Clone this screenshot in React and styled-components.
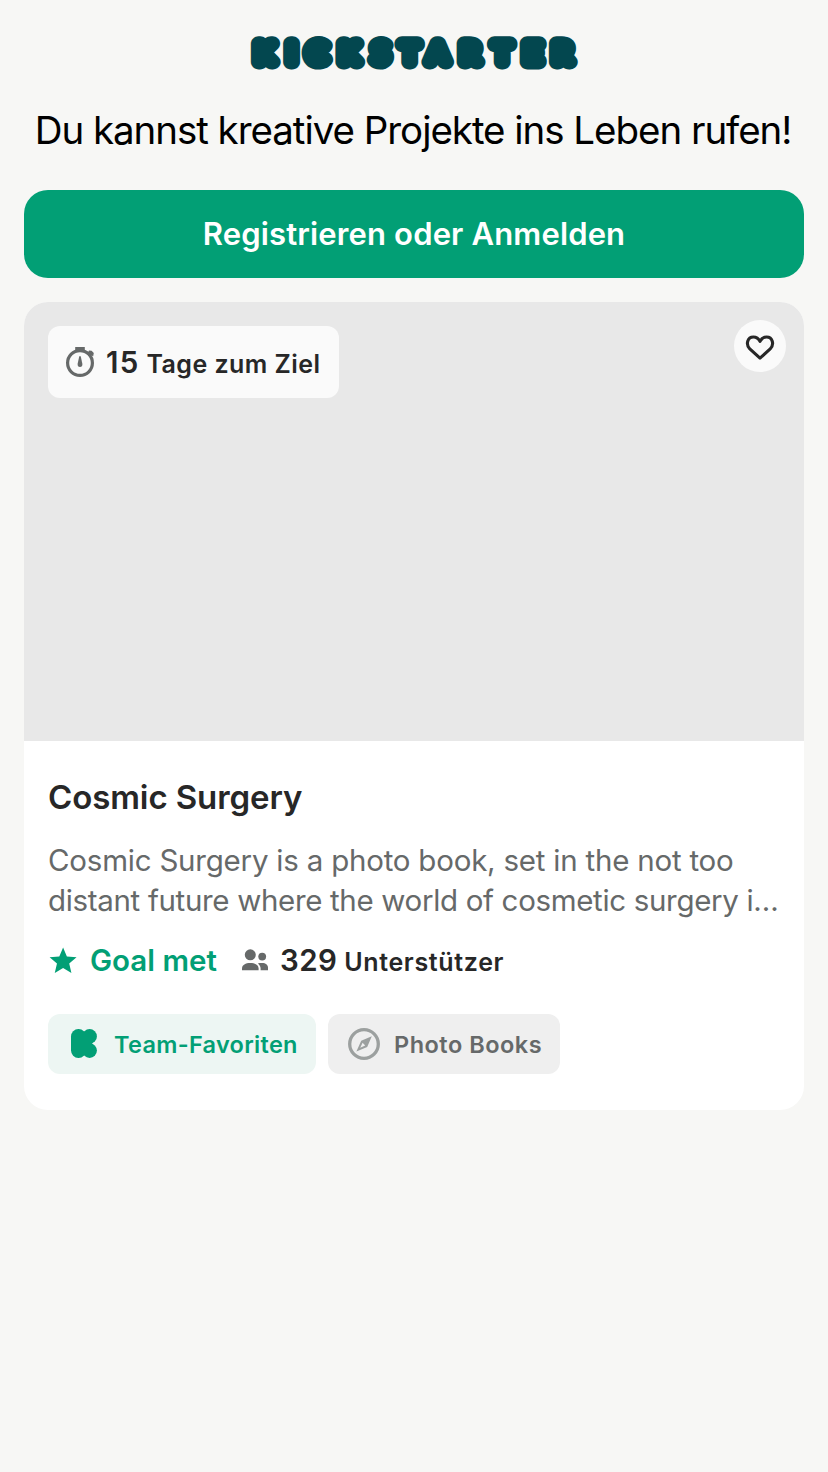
import React from 'react';
import styled, { createGlobalStyle } from 'styled-components';

const colors = {
  page: '#f7f7f5',
  brand: '#03474f',
  green: '#029f75',
  text: '#272727',
  muted: '#666969',
  soft: '#9ca09f',
};

const GlobalStyle = createGlobalStyle`
  * { box-sizing: border-box; }
  body {
    margin: 0;
    background: ${colors.page};
    color: ${colors.text};
    font-family: Inter, 'Liberation Sans', sans-serif;
  }
`;

const Page = styled.main`
  display: flex;
  flex-direction: column;
  align-items: stretch;
  min-height: 1472px;
  padding: 36px 24px 0;
`;

const Wordmark = styled.svg`
  display: block;
  align-self: center;
  width: 330px;
  height: 34px;
  overflow: visible;
  fill: ${colors.brand};

  text {
    font-family: Lato, sans-serif;
    font-size: 26px;
    font-weight: 300;
    text-anchor: middle;
    text-rendering: geometricPrecision;
    stroke: ${colors.brand};
    stroke-width: 14.8px;
    stroke-linejoin: round;
    stroke-linecap: round;
  }
`;

const Headline = styled.h1`
  margin: 36px 0;
  padding-right: 2px;
  font-size: 38.5px;
  font-weight: 400;
  line-height: 48px;
  letter-spacing: -1.04px;
  text-align: center;
  white-space: nowrap;
  color: #000;
`;

const SignUpButton = styled.button`
  height: 88px;
  flex: none;
  border: 0;
  border-radius: 24px;
  background: ${colors.green};
  color: #fff;
  font: 600 31px/40px Inter, sans-serif;
  letter-spacing: 0.15px;
`;

const Card = styled.article`
  margin-top: 24px;
  border-radius: 24px;
  overflow: hidden;
  background: #fff;
`;

const Media = styled.div`
  display: flex;
  justify-content: space-between;
  align-items: flex-start;
  height: 439px;
  padding: 18px 18px 0 24px;
  background: #e8e8e8;
`;

const Deadline = styled.div`
  display: flex;
  align-items: center;
  width: 291px;
  height: 72px;
  margin-top: 6px;
  padding-left: 16px;
  gap: 10px;
  border-radius: 12px;
  background: #fafafa;
`;

const SaveButton = styled.button`
  display: grid;
  place-items: center;
  width: 52px;
  height: 52px;
  padding: 2px 0 0;
  border: 0;
  border-radius: 50%;
  background: #fafafa;
  color: ${colors.text};
`;

const Icon = styled.svg`
  display: block;
  flex: none;
  width: ${(p) => p.$size}px;
  height: ${(p) => p.$size}px;
  color: ${(p) => p.$color || 'inherit'};
`;

const Stat = styled.span`
  padding-top: ${(p) => p.$drop || 0}px;
  font-size: 25px;
  font-weight: 600;
  line-height: 40px;
  letter-spacing: ${(p) => p.$tracking}px;
  white-space: pre;
`;

const Count = styled.span`
  font-size: 29.5px;
  letter-spacing: ${(p) => p.$tracking}px;
`;

const Body = styled.div`
  padding: 34px 24px 36px;
`;

const Title = styled.h2`
  margin: 0;
  font-size: 33px;
  font-weight: 600;
  line-height: 44px;
  letter-spacing: -0.1px;
`;

const Description = styled.p`
  margin: 21px 0 0;
  font-size: 29.5px;
  line-height: 40px;
  color: ${colors.muted};
  white-space: nowrap;
`;

const Line = styled.span`
  display: block;
  letter-spacing: ${(p) => p.$tracking}px;
`;

const Meta = styled.div`
  display: flex;
  align-items: center;
  height: 40px;
  margin-top: 21px;
`;

const Goal = styled.span`
  width: 162px;
  padding: 0 0 2px 11px;
  font-size: 29.5px;
  font-weight: 600;
  line-height: 40px;
  letter-spacing: 0;
  color: ${colors.green};
`;

const Backers = styled.div`
  display: flex;
  align-items: center;
  gap: 11px;
`;

const Tags = styled.div`
  display: flex;
  gap: 12px;
  margin-top: 33px;
`;

const Tag = styled.span`
  display: flex;
  align-items: center;
  gap: 14px;
  width: ${(p) => p.$width}px;
  height: 60px;
  padding-left: 20px;
  border-radius: 12px;
  background: ${(p) => p.$background};
  color: ${(p) => p.$color};
  font-size: 23.5px;
  font-weight: 600;
  letter-spacing: ${(p) => p.$tracking}px;
  white-space: nowrap;
`;

const Logo = () => (
  <Wordmark viewBox="0 0 330 34" role="img" aria-label="Kickstarter">
    <circle cx="68" cy="17" r="4" />
    <text transform="scale(1.05 1)" y="26.4" x="14.6 40.5 64.7 95.1 125.2 152.9 179.7 210.4 241 270 298.2">
      KICKSTARTER
    </text>
  </Wordmark>
);

const StopwatchIcon = () => (
  <Icon $size={32} $color={colors.muted} viewBox="0 0 32 32">
    <circle cx="16" cy="17" r="12.4" fill="none" stroke="currentColor" strokeWidth="3.2" />
    <path d="M11.2 1h9.6v4h-9.6zM23.4 7.6l1.6-3 2.6.2 2.2 2.2-.6 3.2z" fill="currentColor" />
    <path d="M15.2 10.6q.8-1 1.6 0l1.6 7.4q.1 3-2.4 3t-2.4-3z" fill="currentColor" />
  </Icon>
);

const HeartIcon = () => (
  <Icon $size={32} viewBox="0 0 32 32">
    <path
      d="M16 27.2L5.8 17.8C1.4 13.4 3.5 6 9.4 6c3.2 0 5.4 2 6.6 4.4C17.2 8 19.4 6 22.6 6c5.9 0 8 7.4 3.6 11.8z"
      fill="none"
      stroke="currentColor"
      strokeWidth="3.1"
      strokeLinejoin="round"
    />
  </Icon>
);

const StarIcon = () => (
  <Icon $size={31} $color={colors.green} viewBox="0.8 0.9 23 23">
    <path fill="currentColor" d="M12 17.27L18.18 21l-1.64-7.03L22 9.24l-7.19-.61L12 2 9.19 8.63 2 9.24l5.46 4.73L5.82 21z" />
  </Icon>
);

const PeopleIcon = () => (
  <Icon $size={28} $color={colors.muted} viewBox="0 0 28 28">
    <circle cx="9.3" cy="7.8" r="5.5" fill="currentColor" />
    <circle cx="21.2" cy="9.6" r="3.9" fill="currentColor" />
    <path d="M1 23.2v-1.8C1 18 4.6 16 9.3 16s8.3 2 8.3 5.4v1.8z" fill="currentColor" />
    <path d="M16.8 16.4c1.2-.3 2.7-.4 4.4-.4 3.4 0 5.8 1.8 5.8 4.6v2.6h-7.4v-1.8c0-2-1.1-3.8-2.8-5z" fill="currentColor" />
  </Icon>
);

const MarkIcon = () => (
  <Icon $size={32} viewBox="0 0 32 32">
    <g fill="currentColor">
      <rect x="3" y="1" width="15" height="29" rx="7.4" />
      <circle cx="21.6" cy="8.4" r="7.3" />
      <circle cx="21.6" cy="22.6" r="7.3" />
      <path d="M12 4.5h8l6.6 8.1-2.6 2.9 2.6 2.9L20 26.5h-8z" />
    </g>
  </Icon>
);

const CompassIcon = () => (
  <Icon $size={32} $color={colors.soft} viewBox="0 0 32 32">
    <circle cx="16" cy="16" r="14.3" fill="none" stroke="currentColor" strokeWidth="3.3" />
    <path
      fill="currentColor"
      fillRule="evenodd"
      d="M23.8 8.2l-4.6 10.8L8.4 23.6l4.8-10.8zM14.6 14.8l-2.4 5 5-2.4z"
    />
  </Icon>
);

export default function App() {
  return (
    <>
      <GlobalStyle />
      <Page>
        <Logo />
        <Headline>Du kannst kreative Projekte ins Leben rufen!</Headline>
        <SignUpButton>Registrieren oder Anmelden</SignUpButton>
        <Card>
          <Media>
            <Deadline>
              <StopwatchIcon />
              <Stat $tracking={0.45} $drop={2}>
                <Count $tracking={1.3}>15</Count> Tage zum Ziel
              </Stat>
            </Deadline>
            <SaveButton aria-label="Projekt merken">
              <HeartIcon />
            </SaveButton>
          </Media>
          <Body>
            <Title>Cosmic Surgery</Title>
            <Description>
              <Line $tracking={-0.22}>Cosmic Surgery is a photo book, set in the not too</Line>
              <Line $tracking={-0.33}>distant future where the world of cosmetic surgery i…</Line>
            </Description>
            <Meta>
              <StarIcon />
              <Goal>Goal met</Goal>
              <Backers>
                <PeopleIcon />
                <Stat $tracking={0.66}>
                  <Count $tracking={0.4}>329</Count> Unterstützer
                </Stat>
              </Backers>
            </Meta>
            <Tags>
              <Tag $width={268} $background="#edf6f3" $color={colors.green} $tracking={0.3}>
                <MarkIcon />
                Team-Favoriten
              </Tag>
              <Tag $width={232} $background="#efefef" $color={colors.muted} $tracking={0.5}>
                <CompassIcon />
                Photo Books
              </Tag>
            </Tags>
          </Body>
        </Card>
      </Page>
    </>
  );
}
